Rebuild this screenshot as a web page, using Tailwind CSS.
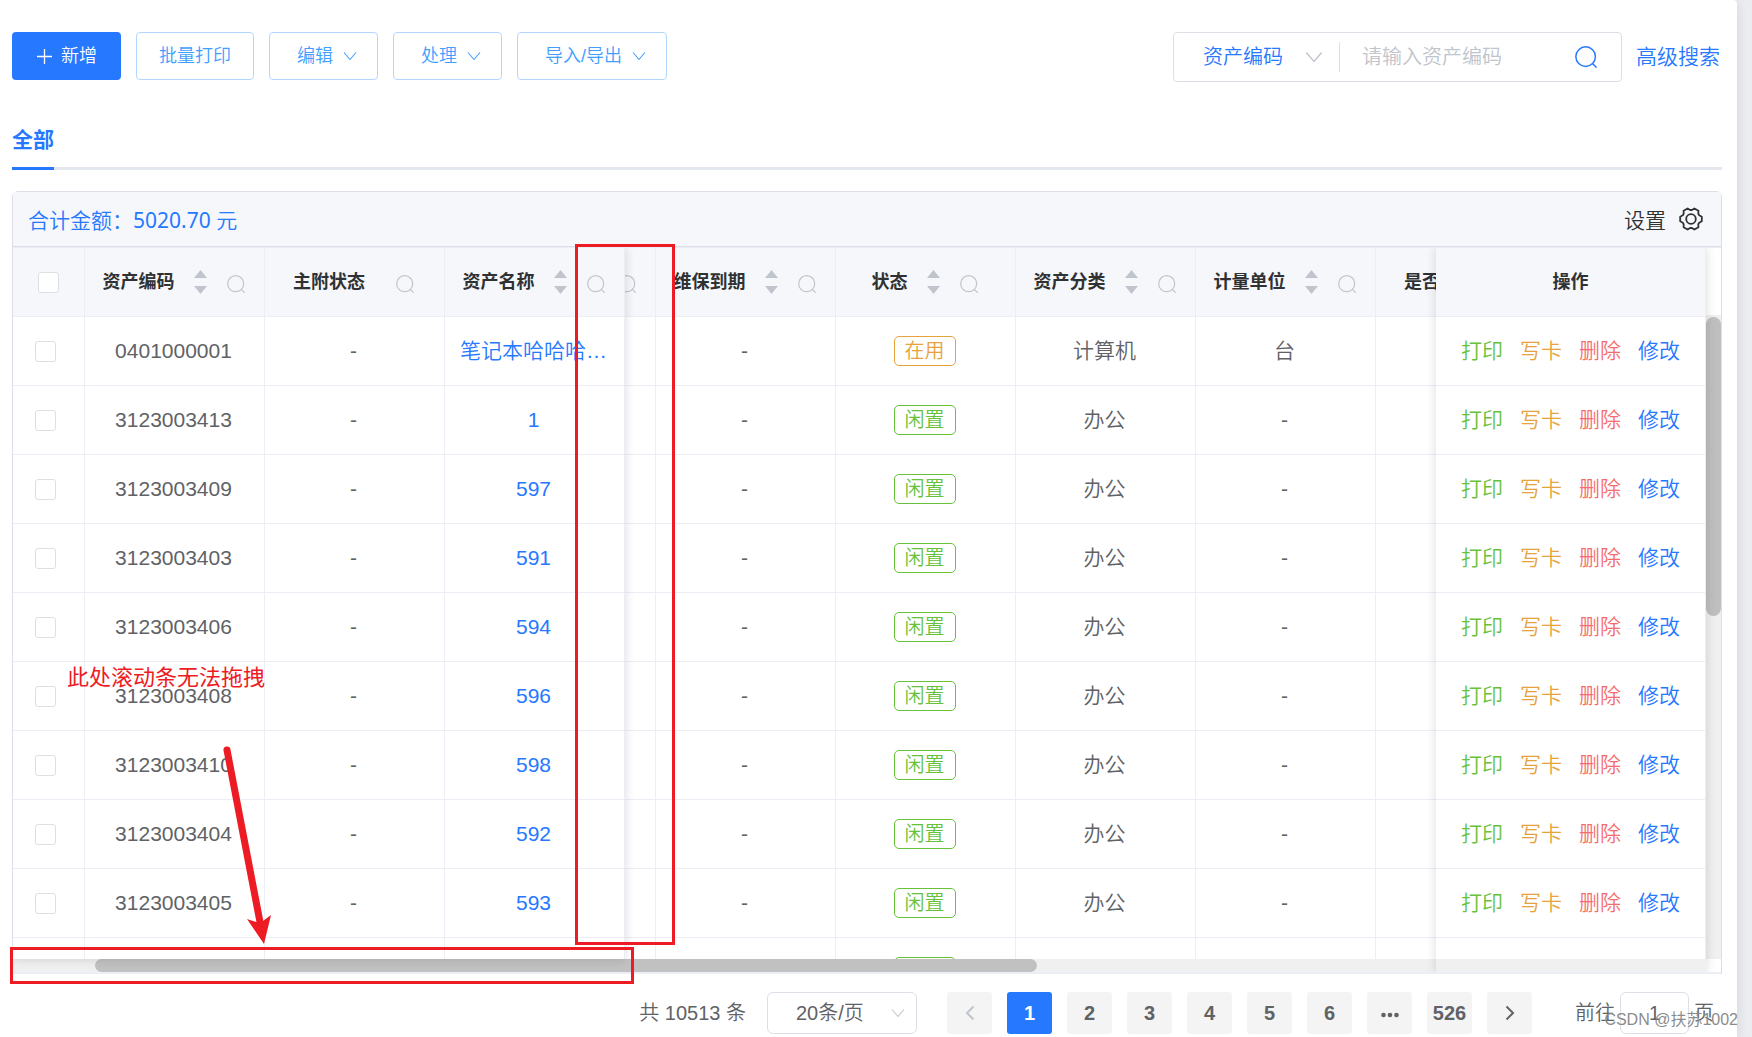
<!DOCTYPE html>
<html lang="zh-CN">
<head>
<meta charset="utf-8">
<meta name="viewport" content="width=device-width, initial-scale=1">
<title>资产列表</title>
<script src="https://cdn.jsdelivr.net/npm/@tailwindcss/browser@4"></script>
</head>
<body class="bg-[#ebecf0] font-['Liberation_Sans','Noto_Sans_CJK_SC',sans-serif] font-[350] text-[#606266]">
<svg class="hidden" aria-hidden="true">
  <symbol id="down" viewBox="0 0 14 14"><path d="M1 3.500l6 7 6-7" fill="none" stroke="currentColor" stroke-width="1.100"/></symbol>
  <symbol id="search" viewBox="0 0 18 18"><circle cx="8.700" cy="8.700" r="8" fill="none" stroke="currentColor" stroke-width="1.200"/><path d="M14.300 14.300l3.400 3.400" stroke="currentColor" stroke-width="1.200"/></symbol>
  <symbol id="sort" viewBox="0 0 13 24"><path d="M0 8L6.500 0 13 8zM0 16h13l-6.500 8z" fill="currentColor"/></symbol>
</svg>
<div class="relative min-h-screen overflow-hidden">
  <main class="mr-[15px] min-h-screen rounded-tr bg-white pr-[15px] pl-3 pt-8 shadow-[0_2px_12px_rgba(0,0,0,0.1)]">
    <div class="flex h-[50px] items-start justify-between">
      <div class="flex gap-[15px] text-lg leading-6 text-[#409eff]">
        <button class="flex h-12 items-center gap-2 rounded bg-[#2678ff] px-6 text-white">
          <svg class="size-[17px]" viewBox="0 0 17 17"><path d="M8.500 1v15M1 8.500h15" stroke="currentColor" stroke-width="1.300"/></svg>新增</button>
        <button class="h-12 rounded border border-[#b3d8ff] px-[22px]">批量打印</button>
        <button class="flex h-12 items-center gap-2.5 rounded border border-[#b3d8ff] pr-5 pl-[27px]">编辑<svg class="size-[14px]"><use href="#down"/></svg></button>
        <button class="flex h-12 items-center gap-2.5 rounded border border-[#b3d8ff] pr-5 pl-[27px]">处理<svg class="size-[14px]"><use href="#down"/></svg></button>
        <button class="flex h-12 items-center gap-2.5 rounded border border-[#b3d8ff] pr-5 pl-[27px]">导入/导出<svg class="size-[14px]"><use href="#down"/></svg></button>
      </div>
      <div class="flex items-center gap-[14px] pr-0.5">
        <div class="flex h-[50px] w-[449px] items-center rounded border border-[#dcdfe6] text-xl">
          <div class="relative flex w-[166px] items-center border-r border-[#dcdfe6]">
            <select aria-label="搜索字段" class="h-[30px] w-full appearance-none bg-transparent pl-[29px] leading-[30px] text-[#2678ff] outline-none"><option>资产编码</option></select>
            <svg class="pointer-events-none absolute right-4 size-[18px] text-[#c0c4cc]"><use href="#down"/></svg>
          </div>
          <input aria-label="资产编码" placeholder="请输入资产编码" class="h-12 min-w-0 flex-1 bg-transparent pl-[22px] placeholder-[#c0c4cc] outline-none">
          <button aria-label="搜索" class="mr-6 text-[#2678ff]"><svg class="size-[22px]"><use href="#search"/></svg></button>
        </div>
        <a href="#" class="text-[21px] text-[#2678ff]">高级搜索</a>
      </div>
    </div>

    <nav class="mt-10 flex h-12 border-b-[3px] border-[#e4e7ed]">
      <a href="#" class="-mb-[3px] border-b-[3px] border-[#2678ff] text-[21px] leading-9 font-bold text-[#2678ff]">全部</a>
    </nav>

    <section class="mt-[21px] rounded-t-md border border-b-0 border-[#dcdfe6]">
      <div class="flex h-[55px] items-center justify-between border-b border-[#dcdfe6] bg-[#f5f7fa] pr-[18px] pl-[15px] text-[21px] text-[#303133]">
        <p class="pt-[3px] font-['Noto_Sans','Noto_Sans_CJK_SC',sans-serif] text-[#2678ff]">合计金额：<span class="font-normal">5020.70</span> 元</p>
        <button class="flex items-center gap-[13px]"><span class="pt-[3px]">设置</span>
          <svg class="size-6" viewBox="0 0 24 24" fill="none" stroke="currentColor" stroke-width="1.800" stroke-linejoin="round"><path d="M20.200 15.700L22.800 14.300V9.700L20.200 8.300 19.300 6.700 19.400 3.800 15.400 1.500 12.900 3H11.100L8.600 1.500 4.600 3.800 4.700 6.700 3.800 8.300 1.200 9.700V14.300L3.800 15.700 4.700 17.300 4.600 20.200 8.600 22.500 11.100 21H12.900L15.400 22.500 19.400 20.200 19.300 17.300z"/><circle cx="12" cy="12" r="4.800"/></svg>
        </button>
      </div>
      <div class="relative flex h-[727px] flex-col overflow-hidden border-t border-b-2 border-[#ebeef5]">
        <div class="flex min-h-0 flex-1">
          <div class="min-w-0 flex-1 overflow-hidden">
            <table class="w-full table-fixed border-separate border-spacing-0 text-center text-[21px]">
              <colgroup><col class="w-[72px]"><col class="w-[180px]"><col class="w-[180px]"><col class="w-[180px]"><col class="w-[31px]"><col class="w-[180px]"><col class="w-[180px]"><col class="w-[180px]"><col class="w-[180px]"><col><col class="w-[270px]"></colgroup>
              <thead class="text-lg font-bold text-[#303133]"><tr id="head"></tr></thead>
              <tbody id="rows"></tbody>
            </table>
          </div>
          <div class="flex w-[15px] flex-col bg-[#f0f0f0]">
            <div class="h-[67px] bg-white"></div>
            <div class="mt-0.5 h-[299px] rounded-full bg-[#bfbfbf]"></div>
          </div>
        </div>
        <div class="flex h-[13px]">
          <div class="min-w-0 flex-1 bg-[#f0f0f0] pl-[82px]"><div class="h-full w-[942px] rounded-full bg-[#c1c1c1]"></div></div>
          <div class="w-[15px] bg-white"></div>
        </div>
        <div class="pointer-events-none absolute top-0 bottom-[13px] left-0 w-[612px] shadow-[0_0_10px_rgba(0,0,0,0.15)]"></div>
        <div class="pointer-events-none absolute top-0 right-[15px] bottom-0 w-[270px] shadow-[0_0_10px_rgba(0,0,0,0.15)]"></div>
      </div>
    </section>

    <footer class="mt-[18px] flex h-[42px] items-center justify-end pr-2 text-xl">
      <span class="mr-[21px]">共 <span class="font-normal">10513</span> 条</span>
      <div class="relative mr-[30px] flex items-center">
        <select aria-label="每页条数" class="h-[42px] w-[150px] appearance-none rounded-md border border-[#dcdfe6] bg-transparent pl-7 outline-none"><option>20条/页</option></select>
        <svg class="pointer-events-none absolute right-3 size-[14px] text-[#c0c4cc]"><use href="#down"/></svg>
      </div>
      <div class="flex gap-[15px] font-bold">
        <button aria-label="上一页" class="flex h-[42px] w-[45px] items-center justify-center rounded-[3px] bg-[#f4f4f5] text-[#c0c4cc]"><svg class="h-4 w-[10px]" viewBox="0 0 10 16"><path d="M8.500 1.500L2 8l6.500 6.500" fill="none" stroke="currentColor" stroke-width="2"/></svg></button>
        <button class="h-[42px] w-[45px] rounded-[3px] bg-[#2678ff] text-white">1</button>
        <button class="h-[42px] w-[45px] rounded-[3px] bg-[#f4f4f5]">2</button>
        <button class="h-[42px] w-[45px] rounded-[3px] bg-[#f4f4f5]">3</button>
        <button class="h-[42px] w-[45px] rounded-[3px] bg-[#f4f4f5]">4</button>
        <button class="h-[42px] w-[45px] rounded-[3px] bg-[#f4f4f5]">5</button>
        <button class="h-[42px] w-[45px] rounded-[3px] bg-[#f4f4f5]">6</button>
        <button aria-label="更多页" class="flex h-[42px] w-[45px] items-center justify-center rounded-[3px] bg-[#f4f4f5]"><svg class="mt-1 h-[6px] w-[18px]" viewBox="0 0 18 6" fill="currentColor"><circle cx="2.500" cy="3" r="2.300"/><circle cx="9" cy="3" r="2.300"/><circle cx="15.500" cy="3" r="2.300"/></svg></button>
        <button class="h-[42px] w-[45px] rounded-[3px] bg-[#f4f4f5]">526</button>
        <button aria-label="下一页" class="flex h-[42px] w-[45px] items-center justify-center rounded-[3px] bg-[#f4f4f5]"><svg class="h-4 w-[10px]" viewBox="0 0 10 16"><path d="M1.500 1.500L8 8l-6.500 6.500" fill="none" stroke="currentColor" stroke-width="2"/></svg></button>
      </div>
      <label class="ml-[43px] flex items-center gap-[5px]">前往
        <input value="1" class="h-[42px] w-[69px] rounded-md border border-[#dcdfe6] bg-transparent text-center font-normal outline-none">页</label>
    </footer>
  </main>

  <!-- 标注 -->
  <div class="pointer-events-none absolute top-[244px] left-[575px] h-[701px] w-[100px] border-[3px] border-[#ed1c24]"></div>
  <div class="pointer-events-none absolute top-[947px] left-[10px] h-[37px] w-[624px] border-[3px] border-[#ed1c24]"></div>
  <p class="pointer-events-none absolute top-[662px] left-[67px] text-[22px] leading-8 font-normal text-[#ed1c24]">此处滚动条无法拖拽</p>
  <svg class="pointer-events-none absolute top-[740px] left-[220px] h-[210px] w-[60px]" viewBox="0 0 60 210"><path d="M7 10l33 172" stroke="#ed1c24" stroke-width="7" stroke-linecap="round"/><path d="M44 204L27 179l9 3 7-1 8-6z" fill="#ed1c24"/></svg>
  <p class="pointer-events-none absolute right-[14px] bottom-[5px] text-base leading-6 font-normal text-[#8c8c8c]">CSDN @扶苏1002</p>
</div>
<script>
  const icon = '<svg class="mt-1 size-[18px] shrink-0 text-[#c0c4cc]"><use href="#search"/></svg>';
  const sort = '<svg class="mr-5 ml-[19px] h-6 w-[13px] shrink-0 text-[#c0c4cc]"><use href="#sort"/></svg>';
  const th = (inner, pad = 'pr-0.5') => `<th class="h-[69px] overflow-hidden border-r border-b border-[#ebeef5] bg-[#f5f7fa] py-0 ${pad}"><div class="flex items-center justify-center whitespace-nowrap">${inner}</div></th>`;
  document.getElementById('head').innerHTML =
    th('<input type="checkbox" aria-label="全选" class="size-[21px] appearance-none rounded-[3px] border border-[#dcdfe6] bg-white">', 'px-0') +
    th('资产编码' + sort + icon) +
    th('主附状态<span class="w-[31px]"></span>' + icon) +
    th('资产名称' + sort + icon) +
    `<th class="h-[69px] overflow-hidden border-r border-b border-[#ebeef5] bg-[#f5f7fa] p-0"><div class="flex justify-end pr-[19px]">${icon}</div></th>` +
    th('维保到期' + sort + icon) +
    th('状态' + sort + icon) +
    th('资产分类' + sort + icon) +
    th('计量单位' + sort + icon) +
    '<th class="h-[69px] overflow-hidden border-b border-[#ebeef5] bg-[#f5f7fa] p-0 pl-7 text-left whitespace-nowrap">是否</th>' +
    th('操作', 'px-0');

  const td = (inner, extra = 'pr-0.5') => `<td class="h-[69px] overflow-hidden border-r border-b border-[#ebeef5] py-0 ${extra}">${inner}</td>`;
  const data = [
    ['0401000001', '笔记本哈哈哈…', '在用', '计算机', '台'],
    ['3123003413', '1'], ['3123003409', '597'], ['3123003403', '591'], ['3123003406', '594'],
    ['3123003408', '596'], ['3123003410', '598'], ['3123003404', '592'], ['3123003405', '593'], ['3123003407', '595']
  ];
  document.getElementById('rows').innerHTML = data.map(([code, name, state = '闲置', kind = '办公', unit = '-']) => {
    const tone = state === '在用' ? 'border-[#e6a23c] text-[#e6a23c]' : 'border-[#67c23a] text-[#67c23a]';
    return '<tr>' +
      td(`<input type="checkbox" aria-label="选择 ${code}" class="ml-[22px] block size-[21px] appearance-none rounded-[3px] border border-[#dcdfe6] bg-white">`) +
      td(code, 'pr-0.5 font-normal') + td('-', 'pr-0.5 font-normal') +
      td(`<a href="#" class="whitespace-nowrap text-[#2678ff]">${name}</a>`) +
      td('') + td('-', 'pr-0.5 font-normal') +
      td(`<span class="mx-auto block h-[30px] w-[62px] rounded-[5px] border text-xl leading-7 ${tone}">${state}</span>`) +
      td(kind) + td(unit) +
      '<td class="h-[69px] border-b border-[#ebeef5] p-0"></td>' +
      td('<div class="flex justify-center gap-[17px]"><button class="text-[#67c23a]">打印</button><button class="text-[#e6a23c]">写卡</button><button class="text-[#f56c6c]">删除</button><button class="text-[#2678ff]">修改</button></div>', 'px-0') +
      '</tr>';
  }).join('');
</script>
</body>
</html>
